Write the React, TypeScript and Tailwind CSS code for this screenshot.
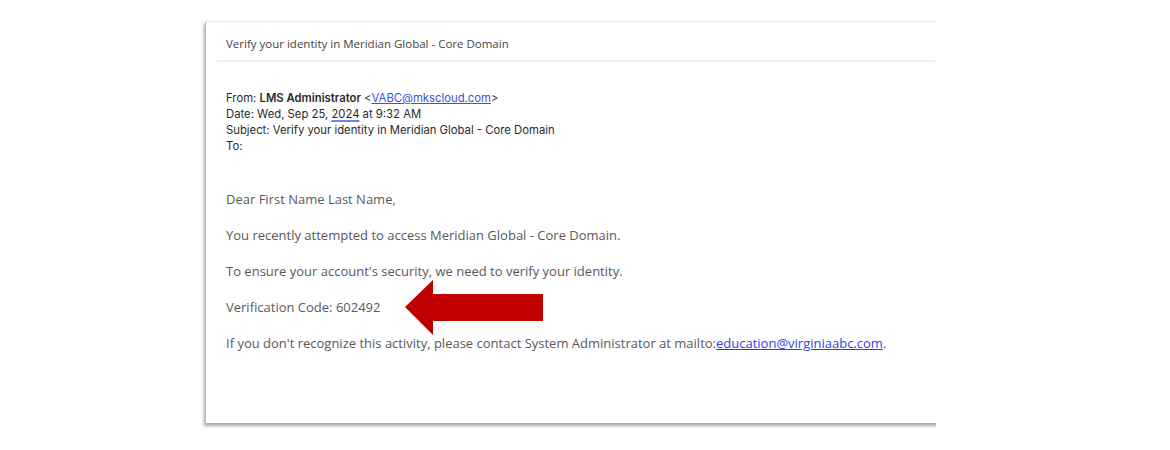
export default function App() {
  return (
    <div className="relative h-[450px] w-full bg-white">
      <div className="ml-[199px] w-[737px] overflow-hidden pl-[6px] pt-[21px] pb-[8px]">
        <div className="h-[402px] w-[760px] border-l border-t border-l-[#b9b9b9] border-t-[#ececec] bg-white shadow-[-1px_3px_3px_rgba(0,0,0,0.35)]">
          <div className="pl-[20px] pt-[14px] text-[11.5px] leading-[16px] text-[#444]" style={{ fontFamily: '"Open Sans", "Noto Sans", sans-serif' }}>
            Verify your identity in Meridian Global - Core Domain
          </div>
          <div className="ml-[11px] mt-[8px] h-[2px] w-[718px] bg-[#efefef]" />

          <div className="mt-[28px] pl-[20px] text-[11.3px] leading-[16px] text-[#2a2a2a]" style={{ fontFamily: 'Inter, "Noto Sans", sans-serif' }}>
            <div>
              From: <span className="font-semibold">LMS Administrator</span> &lt;
              <a className="text-[#3b50e8] underline">VABC@mkscloud.com</a>&gt;
            </div>
            <div>
              Date: Wed, Sep 25, <span className="underline decoration-[#6d86e0] decoration-2 underline-offset-2">2024</span> at 9:32 AM
            </div>
            <div>Subject: Verify your identity in Meridian Global - Core Domain</div>
            <div>To:</div>
          </div>

          <div className="mt-[35px] flex flex-col gap-[16px] pl-[20px] text-[13px] leading-[20px] text-[#595959]" style={{ fontFamily: '"Open Sans", "Noto Sans", sans-serif' }}>
            <p>Dear First Name Last Name,</p>
            <p>You recently attempted to access Meridian Global - Core Domain.</p>
            <p>To ensure your account's security, we need to verify your identity.</p>
            <p>Verification Code: 602492</p>
            <p>
              If you don't recognize this activity, please contact System Administrator at mailto:
              <a className="text-[#2f3fe6] underline">education@virginiaabc.com</a>.
            </p>
          </div>
        </div>
      </div>

      <svg className="absolute left-[404px] top-[279px]" width="141" height="57" viewBox="0 0 141 57">
        <polygon points="1,28 29,1 29,15 139,15 139,42 29,42 29,56" fill="#C00000" />
      </svg>
    </div>
  );
}
